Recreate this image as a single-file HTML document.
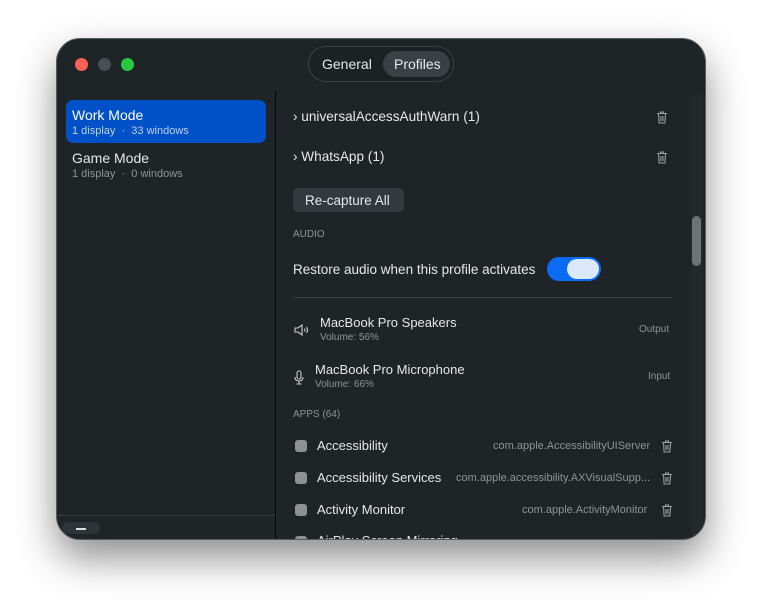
<!DOCTYPE html>
<html><head><meta charset="utf-8"><style>
*{margin:0;padding:0;box-sizing:border-box}
body{width:762px;height:614px;background:#fff;font-family:"Liberation Sans",sans-serif;position:relative;overflow:hidden}
.win{position:absolute;left:56px;top:38px;width:650px;height:502px;background:#1f2427;border-radius:24px;border:1px solid #555a5e;box-shadow:0 18px 40px rgba(0,0,0,.45);overflow:hidden}
.a{position:absolute;white-space:nowrap}
.dot{position:absolute;top:19px;width:13px;height:13px;border-radius:50%}
.seg{position:absolute;left:251px;top:7px;width:146px;height:36px;border-radius:18px;border:1px solid #3a4145;background:#1c2124}
.seg .p{position:absolute;left:74px;top:4px;width:67px;height:26px;border-radius:13px;background:#3a4044}
.t{color:#e6e8ea;font-size:14px}
.s{color:#8e9397;font-size:11px}
.chk{position:absolute;left:238px;width:12px;height:12px;border-radius:3px;background:#8e9194}
</style></head><body>
<svg width="0" height="0" style="position:absolute"><defs><symbol id="tr" viewBox="0 0 12 13"><g fill="none" stroke="#9a9ea2" stroke-width="1.1"><path d="M1 2.5h10M4.5 2.5V1h3v1.5M2.5 2.5l.6 9.5h5.8l.6-9.5M5 5v5M7 5v5"/></g></symbol></defs></svg>
<div class="win">
 <div class="dot" style="left:18px;background:#fe5f57"></div>
 <div class="dot" style="left:41px;background:#4a4f53"></div>
 <div class="dot" style="left:64px;background:#28c840"></div>
 <div class="seg"><div class="p"></div>
  <div class="a t" style="left:13px;top:9px">General</div>
  <div class="a t" style="left:85px;top:9px">Profiles</div></div>
 <div style="position:absolute;left:218px;top:52px;width:1px;height:460px;background:#050607"></div>
 <div style="position:absolute;left:0;top:476px;width:218px;height:1px;background:#353b3e"></div>
 <div style="position:absolute;left:5px;top:483px;width:38px;height:12px;border-radius:6px;background:#2e3438"></div>
 <div style="position:absolute;left:19px;top:489px;width:10px;height:1.5px;background:#ddd"></div>
 <div style="position:absolute;left:9px;top:61px;width:200px;height:43px;border-radius:7px;background:#0050c8"></div>
 <div class="a t" style="left:15px;top:68px;color:#fff">Work Mode</div>
 <div class="a s" style="left:15px;top:86px;color:#bcd0f0">1 display &nbsp;·&nbsp; 33 windows</div>
 <div class="a t" style="left:15px;top:111px">Game Mode</div>
 <div class="a s" style="left:15px;top:129px">1 display &nbsp;·&nbsp; 0 windows</div>
 <div style="position:absolute;left:634px;top:55px;width:12px;height:447px;background:#24292c"></div>
 <div style="position:absolute;left:635px;top:177px;width:9px;height:50px;border-radius:5px;background:#6e7376"></div>
 <div class="a t" style="left:236px;top:70px;font-size:13.6px">›&nbsp;universalAccessAuthWarn (1)</div>
 <svg class="a" style="left:599px;top:72px" width="12" height="13"><use href="#tr"/></svg>
 <div class="a t" style="left:236px;top:110px;font-size:13.6px">›&nbsp;WhatsApp (1)</div>
 <svg class="a" style="left:599px;top:112px" width="12" height="13"><use href="#tr"/></svg>
 <div style="position:absolute;left:236px;top:149px;width:111px;height:24px;border-radius:5px;background:#33393d"></div>
 <div class="a t" style="left:248px;top:154px;font-size:13.5px">Re-capture All</div>
 <div class="a s" style="left:236px;top:190px;font-size:10px">AUDIO</div>
 <div class="a t" style="left:236px;top:223px;font-size:13.5px">Restore audio when this profile activates</div>
 <div style="position:absolute;left:490px;top:218px;width:54px;height:24px;border-radius:12px;background:#0a6cf5"></div>
 <div style="position:absolute;left:510px;top:220px;width:32px;height:20px;border-radius:10px;background:#dde9fb"></div>
 <div style="position:absolute;left:236px;top:258px;width:380px;height:1px;background:#3a4044"></div>
 <svg class="a" style="left:237px;top:284px" width="16" height="14" viewBox="0 0 16 14" fill="none" stroke="#ccc" stroke-width="1.1"><path d="M1 5h3l4-3v10l-4-3H1z"/><path d="M10.5 5.5q1 1.5 0 3M12.5 4q2 3 0 6"/></svg>
 <div class="a t" style="left:263px;top:276px;font-size:13px">MacBook Pro Speakers</div>
 <div class="a s" style="left:263px;top:293px;font-size:10px">Volume: 56%</div>
 <div class="a s" style="left:582px;top:285px;font-size:10px">Output</div>
 <svg class="a" style="left:237px;top:331px" width="10" height="15" viewBox="0 0 10 15" fill="none" stroke="#ccc" stroke-width="1.1"><rect x="3" y="1" width="4" height="8" rx="2"/><path d="M1 7q0 4 4 4t4-4M5 11v3M2.5 14h5"/></svg>
 <div class="a t" style="left:258px;top:323px;font-size:13px">MacBook Pro Microphone</div>
 <div class="a s" style="left:258px;top:340px;font-size:10px">Volume: 66%</div>
 <div class="a s" style="left:591px;top:332px;font-size:10px">Input</div>
 <div class="a s" style="left:236px;top:370px;font-size:10px">APPS (64)</div>
 <div class="chk" style="top:401px"></div><div class="a t" style="left:260px;top:399px;font-size:13px">Accessibility</div>
 <div class="a s" style="left:436px;top:401px">com.apple.AccessibilityUIServer</div><svg class="a" style="left:604px;top:401px" width="12" height="13"><use href="#tr"/></svg>
 <div class="chk" style="top:433px"></div><div class="a t" style="left:260px;top:431px;font-size:13px">Accessibility Services</div>
 <div class="a s" style="left:399px;top:433px">com.apple.accessibility.AXVisualSupp...</div><svg class="a" style="left:604px;top:433px" width="12" height="13"><use href="#tr"/></svg>
 <div class="chk" style="top:465px"></div><div class="a t" style="left:260px;top:463px;font-size:13px">Activity Monitor</div>
 <div class="a s" style="left:465px;top:465px">com.apple.ActivityMonitor</div><svg class="a" style="left:604px;top:465px" width="12" height="13"><use href="#tr"/></svg>
 <div class="chk" style="top:497px"></div><div class="a t" style="left:260px;top:494px;font-size:13px">AirPlay Screen Mirroring</div>
</div>
</body></html>
